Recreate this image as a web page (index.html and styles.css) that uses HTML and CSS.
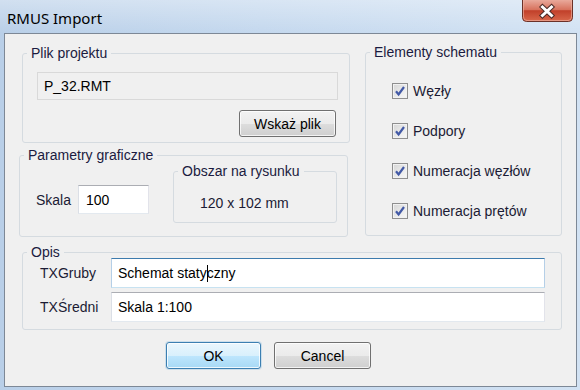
FILE: index.html
```html
<!DOCTYPE html>
<html lang="pl">
<head>
<meta charset="utf-8">
<title>RMUS Import</title>
<link rel="stylesheet" href="styles.css">
</head>
<body>
<div class="window">
  <div class="titlebar">
    <div class="title">RMUS Import</div>
    <div class="close">
      <svg width="51" height="22" viewBox="0 0 51 22">
        <defs>
          <linearGradient id="cg" x1="0" y1="0" x2="0" y2="1">
            <stop offset="0" stop-color="#e9a99b"/>
            <stop offset="0.45" stop-color="#d7725d"/>
            <stop offset="0.5" stop-color="#c1402a"/>
            <stop offset="1" stop-color="#d9694c"/>
          </linearGradient>
        </defs>
        <path d="M0.5 0 V17.5 Q0.5 21.5 4.5 21.5 H46.5 Q50.5 21.5 50.5 17.5 V0" fill="url(#cg)" stroke="#6b3128"/>
        <path d="M1.5 0 V17 Q1.5 20.5 5 20.5 H46 Q49.5 20.5 49.5 17 V0" fill="none" stroke="#f0b8a8" stroke-opacity="0.6"/>
        <path d="M20.5 7 L29.5 15.5 M29.5 7 L20.5 15.5" stroke="#4a2a26" stroke-width="5" stroke-linecap="square"/>
        <path d="M20.5 7 L29.5 15.5 M29.5 7 L20.5 15.5" stroke="#ffffff" stroke-width="3" stroke-linecap="square"/>
      </svg>
    </div>
  </div>
  <div class="client">
    <div class="top">
      <div class="left">
        <fieldset class="gb gb-plik">
          <legend>Plik projektu</legend>
          <div class="tb ro plik-tb">P_32.RMT</div>
          <button class="btn wskaz">Wskaż plik</button>
        </fieldset>
        <fieldset class="gb gb-param">
          <legend>Parametry graficzne</legend>
          <div class="param-body">
            <div class="skala"><span class="lbl skala-lbl">Skala</span><div class="tb skala-tb">100</div></div>
            <fieldset class="gb gb-obszar">
              <legend>Obszar na rysunku</legend>
              <div class="obszar-val">120 x 102 mm</div>
            </fieldset>
          </div>
        </fieldset>
      </div>
      <fieldset class="gb gb-elem">
        <legend>Elementy schematu</legend>
        <ul class="checks">
          <li><span class="cb"><svg width="14" height="14" viewBox="0 0 14 14"><path d="M3 7.2 L5.6 10.5 L11 3" fill="none" stroke="#4259a6" stroke-width="2.2"/></svg></span>Węzły</li>
          <li><span class="cb"><svg width="14" height="14" viewBox="0 0 14 14"><path d="M3 7.2 L5.6 10.5 L11 3" fill="none" stroke="#4259a6" stroke-width="2.2"/></svg></span>Podpory</li>
          <li><span class="cb"><svg width="14" height="14" viewBox="0 0 14 14"><path d="M3 7.2 L5.6 10.5 L11 3" fill="none" stroke="#4259a6" stroke-width="2.2"/></svg></span>Numeracja węzłów</li>
          <li><span class="cb"><svg width="14" height="14" viewBox="0 0 14 14"><path d="M3 7.2 L5.6 10.5 L11 3" fill="none" stroke="#4259a6" stroke-width="2.2"/></svg></span>Numeracja prętów</li>
        </ul>
      </fieldset>
    </div>
    <fieldset class="gb gb-opis">
      <legend>Opis</legend>
      <div class="opis-body">
        <div class="row"><span class="lbl opis-lbl">TXGruby</span><div class="tb focus opis-tb">Schemat staty<span class="caret"></span>czny</div></div>
        <div class="row"><span class="lbl opis-lbl">TXŚredni</span><div class="tb opis-tb">Skala 1:100</div></div>
      </div>
    </fieldset>
    <div class="buttons">
      <button class="btn default ok">OK</button>
      <button class="btn cancel">Cancel</button>
    </div>
  </div>
</div>
</body>
</html>
```

FILE: styles.css
```css
html, body {
  margin: 0;
  padding: 0;
}
body {
  width: 580px;
  height: 390px;
  overflow: hidden;
  font-family: "Liberation Sans", Arial, sans-serif;
  font-size: 14px;
  color: #1b1b34;
}
.window {
  width: 580px;
  height: 390px;
  display: flex;
  flex-direction: column;
  background: linear-gradient(90deg, #b9cfe8 0%, #c4d8ee 45%, #d2e2f3 100%);
}
.titlebar {
  height: 33px;
  flex: none;
  display: flex;
  justify-content: space-between;
  align-items: flex-start;
  padding: 0 7px;
  background: linear-gradient(180deg, rgba(255,255,255,0.35) 0%, rgba(255,255,255,0) 100%);
}
.title {
  margin-top: 8px;
  font-family: "Noto Sans", sans-serif;
  font-size: 15px;
  line-height: 20px;
  color: #000;
}
.close {
  width: 51px;
  height: 22px;
}
.close svg {
  display: block;
}
.client {
  flex: 1;
  margin: 0 3px 3px 4px;
  background: #f0f0f0;
  border: 1px solid #7d8896;
  padding: 10px 0 0 14px;
}
.top {
  display: flex;
  align-items: flex-start;
  gap: 15px;
}
.left {
  width: 331px;
  display: flex;
  flex-direction: column;
}
fieldset.gb {
  margin: 0;
  padding: 0;
  min-width: 0;
  box-sizing: border-box;
  border: 1px solid #d5dbe0;
  border-radius: 3px;
}
fieldset.gb > legend {
  padding: 0 4px;
  margin-left: 4px;
  line-height: 16px;
  color: #1b1b40;
}
.gb-plik {
  margin: 1px 0 0 3px !important;
  width: 328px;
  height: 98px;
  display: flex;
  flex-direction: column;
}
.tb {
  box-sizing: border-box;
  border: 1px solid;
  border-color: #abadb3 #e2e3ea #e3e9ef #dbdfe6;
  background: #fff;
  padding-left: 6px;
  display: flex;
  align-items: center;
  color: #000;
  white-space: pre;
}
.tb.ro {
  background: #f0f0f0;
  border-color: #d9d9d9;
}
.tb.focus {
  border-color: #3d7bad #b5cfe7 #c7e2f1 #b5cfe7;
}
.plik-tb {
  margin: 11px 0 0 14px;
  width: 301px;
  height: 28px;
}
.btn {
  font-family: "Liberation Sans", Arial, sans-serif;
  font-size: 14px;
  color: #000;
  box-sizing: border-box;
  height: 27px;
  border: 1px solid #707070;
  border-radius: 3px;
  background: linear-gradient(180deg, #f2f2f2 0%, #ebebeb 50%, #dddddd 51%, #cfcfcf 100%);
  box-shadow: inset 0 0 0 1px rgba(255,255,255,0.75);
  padding: 0;
}
.wskaz {
  width: 97px;
  margin: 10px 0 0 216px;
}
.gb-param {
  margin-top: 4px !important;
  width: 329px;
  height: 90px;
}
.param-body {
  display: flex;
  align-items: flex-start;
  padding-left: 16px;
}
.skala {
  display: flex;
  align-items: center;
  gap: 7px;
  margin-top: 22px;
}
.skala-lbl {
  width: 35px;
  white-space: nowrap;
}
.skala-tb {
  width: 71px;
  height: 29px;
  padding-left: 7px;
}
.gb-obszar {
  width: 164px;
  height: 60px;
  margin-left: auto !important;
  margin-right: 10px !important;
}
.gb-obszar > legend {
  margin-left: 5px;
}
.obszar-val {
  padding: 16px 0 0 26px;
  line-height: 16px;
}
.gb-elem {
  width: 197px;
  height: 192px;
}
.checks {
  list-style: none;
  margin: 0;
  padding: 23px 0 0 26px;
  display: flex;
  flex-direction: column;
  gap: 24px;
}
.checks li {
  display: flex;
  align-items: center;
  gap: 5px;
  height: 16px;
  line-height: 16px;
}
.cb {
  box-sizing: border-box;
  width: 16px;
  height: 16px;
  border: 1px solid #8f8f8f;
  background: linear-gradient(135deg, #d6d6d6 0%, #ececec 60%, #f7f7f7 100%);
  box-shadow: inset 0 0 0 1px #f2f2f2;
  display: flex;
  align-items: center;
  justify-content: center;
}
.cb svg {
  display: block;
}
.gb-opis {
  margin: 7px 0 0 3px !important;
  width: 540px;
  height: 86px;
}
.opis-body {
  margin-top: -2px;
  padding-left: 17px;
  display: flex;
  flex-direction: column;
  gap: 4px;
}
.row {
  display: flex;
  align-items: center;
}
.opis-lbl {
  width: 71px;
}
.opis-tb {
  width: 434px;
  height: 30px;
}
.caret {
  display: inline-block;
  width: 1px;
  height: 17px;
  background: #000;
  margin: 0 -1px 0 0;
}
.buttons {
  display: flex;
  gap: 13px;
  margin: 12px 0 0 147px;
}
.ok {
  width: 95px;
}
.cancel {
  width: 97px;
}
.btn.default {
  border-color: #3c7fb1;
  background: linear-gradient(180deg, #eaf6fd 0%, #d9f0fc 50%, #bee6fd 51%, #a7d9f5 100%);
  box-shadow: inset 0 0 0 1px rgba(255,255,255,0.8), 0 0 0 1px rgba(100,170,220,0.25);
}
```
